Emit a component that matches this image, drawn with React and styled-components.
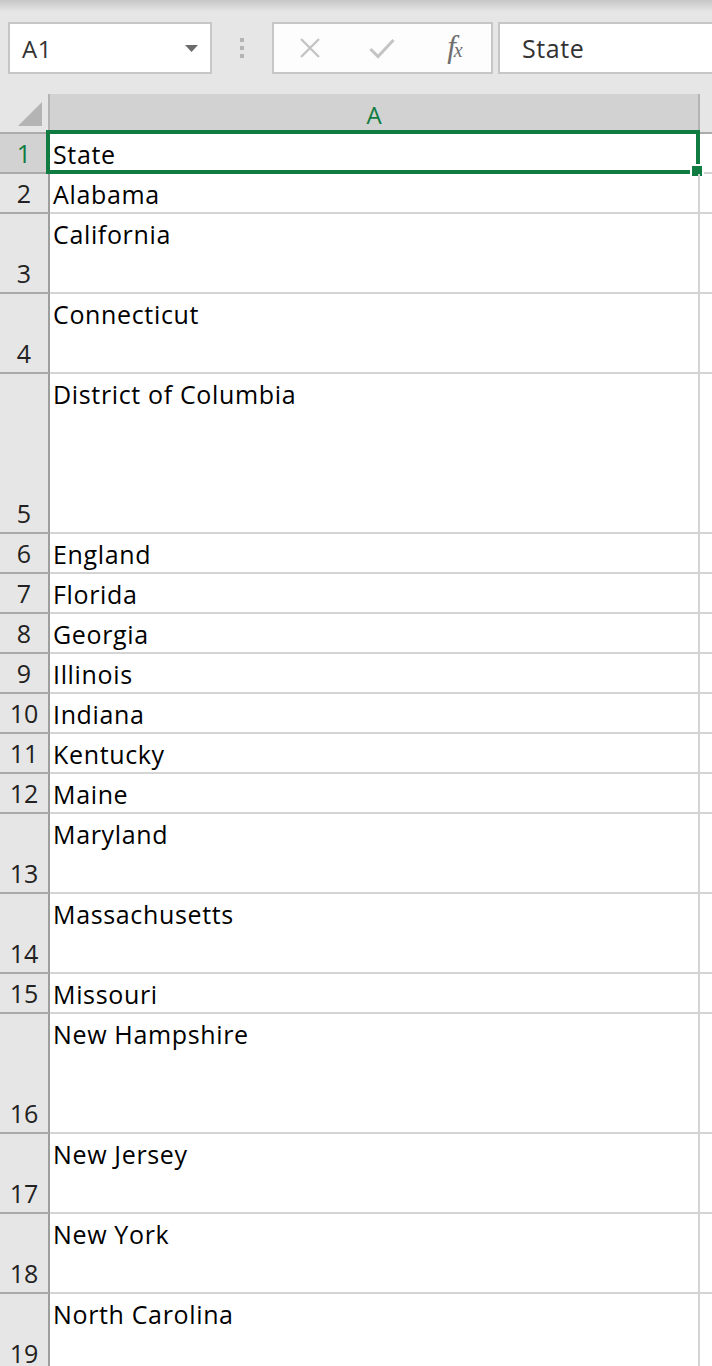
import React from 'react'
import styled, { createGlobalStyle } from 'styled-components'

const GREEN = '#107c41'

const GlobalStyle = createGlobalStyle`
  html, body {
    margin: 0;
    padding: 0;
    overflow: hidden;
    background: #ffffff;
  }
  body {
    font-family: "Open Sans", "Noto Sans", "Liberation Sans", sans-serif;
  }
`

const Page = styled.div`
  width: 712px;
  height: 1366px;
  overflow: hidden;
  background: #ffffff;
`

const Toolbar = styled.div`
  display: flex;
  align-items: flex-start;
  height: 94px;
  box-sizing: border-box;
  padding: 22px 0 0 8px;
  background: linear-gradient(#c6c6c6 0px, #e6e6e6 12px);
`

const NameBox = styled.div`
  display: flex;
  align-items: center;
  justify-content: space-between;
  width: 204px;
  height: 52px;
  box-sizing: border-box;
  padding: 0 12px 0 12px;
  border: 2px solid #c6c6c6;
  background: #ffffff;
  color: #333333;
  font-size: 24px;
  letter-spacing: 0.5px;
`

const Grip = styled.div`
  display: flex;
  flex-direction: column;
  gap: 4px;
  width: 60px;
  box-sizing: border-box;
  padding: 16px 0 0 28px;

  span {
    width: 4px;
    height: 4px;
    background: #b4b4b4;
  }
`

const ButtonBox = styled.div`
  display: flex;
  align-items: center;
  width: 221px;
  height: 52px;
  box-sizing: border-box;
  border: 2px solid #c6c6c6;
  background: #fdfdfd;
`

const ButtonSlot = styled.div`
  display: flex;
  align-items: center;
  justify-content: center;
  width: 72px;
  height: 100%;
`

const Fx = styled.div`
  font-family: "Liberation Serif", "DejaVu Serif", serif;
  font-style: italic;
  color: #6e6e6e;
  font-size: 31px;
  line-height: 1;
  letter-spacing: -2px;
  margin-top: -4px;

  sub {
    font-size: 20px;
    vertical-align: 0;
  }
`

const FormulaBox = styled.div`
  display: flex;
  align-items: center;
  flex: 1;
  height: 52px;
  margin-left: 5px;
  box-sizing: border-box;
  padding-left: 22px;
  border: 2px solid #c6c6c6;
  border-right: none;
  background: #ffffff;
  color: #333333;
  font-size: 25px;
  letter-spacing: 0.6px;
`

const Row = styled.div`
  display: flex;
  height: ${({ $h }) => $h}px;
`

const Corner = styled.div`
  display: flex;
  align-items: flex-end;
  justify-content: flex-end;
  width: 50px;
  box-sizing: border-box;
  padding: 0 6px 6px 0;
  background: #e6e6e6;
  border-right: 2px solid #b4b4b4;
  border-bottom: 2px solid #ababab;
`

const ColHead = styled.div`
  display: flex;
  align-items: center;
  justify-content: center;
  width: 650px;
  box-sizing: border-box;
  padding-top: 2px;
  background: #d2d2d2;
  border-right: 2px solid #b4b4b4;
  border-bottom: 2px solid #ababab;
  color: ${GREEN};
  font-size: 24px;
`

const HeadFill = styled.div`
  flex: 1;
  background: #e6e6e6;
  border-bottom: 2px solid #ababab;
`

const RowHead = styled.div`
  display: flex;
  align-items: flex-end;
  justify-content: center;
  width: 50px;
  box-sizing: border-box;
  background: ${({ $selected }) => ($selected ? '#d2d2d2' : '#e6e6e6')};
  color: ${({ $selected }) => ($selected ? GREEN : '#222222')};
  border-right: 2px solid #9e9e9e;
  border-bottom: 2px solid #ababab;
  font-size: 25px;
  line-height: 38px;
`

const Cell = styled.div`
  position: relative;
  width: 650px;
  box-sizing: border-box;
  padding: 1px 0 0 3px;
  border-right: 2px solid #d4d4d4;
  border-bottom: 2px solid #d4d4d4;
  color: #000000;
  font-size: 25px;
  letter-spacing: 0.65px;
  line-height: 38px;
`

const CellFill = styled.div`
  flex: 1;
  border-bottom: 2px solid #d4d4d4;
`

const Selection = styled.div`
  position: absolute;
  top: -4px;
  left: -4px;
  right: -2px;
  bottom: -2px;
  border: 4px solid ${GREEN};
  pointer-events: none;
`

const FillHandle = styled.div`
  position: absolute;
  right: -8px;
  bottom: -8px;
  width: 10px;
  height: 10px;
  background: ${GREEN};
  border: 2px solid #ffffff;
`

const rows = [
  ['State', 40],
  ['Alabama', 40],
  ['California', 80],
  ['Connecticut', 80],
  ['District of Columbia', 160],
  ['England', 40],
  ['Florida', 40],
  ['Georgia', 40],
  ['Illinois', 40],
  ['Indiana', 40],
  ['Kentucky', 40],
  ['Maine', 40],
  ['Maryland', 80],
  ['Massachusetts', 80],
  ['Missouri', 40],
  ['New Hampshire', 120],
  ['New Jersey', 80],
  ['New York', 80],
  ['North Carolina', 80]
]

export default function App() {
  return (
    <Page>
      <GlobalStyle />
      <Toolbar>
        <NameBox>
          A1
          <svg width="13" height="7" viewBox="0 0 13 7">
            <polygon points="0,0 13,0 6.5,7" fill="#6b6b6b" />
          </svg>
        </NameBox>
        <Grip>
          <span />
          <span />
          <span />
        </Grip>
        <ButtonBox>
          <ButtonSlot>
            <svg width="24" height="20" viewBox="0 0 24 20">
              <path d="M3 1 L21 19 M21 1 L3 19" stroke="#c4c4c4" strokeWidth="2.4" fill="none" />
            </svg>
          </ButtonSlot>
          <ButtonSlot>
            <svg width="26" height="21" viewBox="0 0 26 21">
              <path d="M1.5 11 L9 18.5 L24.5 2" stroke="#c4c4c4" strokeWidth="3" fill="none" />
            </svg>
          </ButtonSlot>
          <ButtonSlot>
            <Fx>
              f<sub>x</sub>
            </Fx>
          </ButtonSlot>
        </ButtonBox>
        <FormulaBox>State</FormulaBox>
      </Toolbar>

      <Row $h={40}>
        <Corner>
          <svg width="24" height="24" viewBox="0 0 24 24">
            <polygon points="24,0 24,24 0,24" fill="#b4b4b4" />
          </svg>
        </Corner>
        <ColHead>A</ColHead>
        <HeadFill />
      </Row>

      {rows.map(([name, h], i) => (
        <Row key={i} $h={h}>
          <RowHead $selected={i === 0}>{i + 1}</RowHead>
          <Cell>
            {name}
            {i === 0 && (
              <Selection>
                <FillHandle />
              </Selection>
            )}
          </Cell>
          <CellFill />
        </Row>
      ))}
    </Page>
  )
}
